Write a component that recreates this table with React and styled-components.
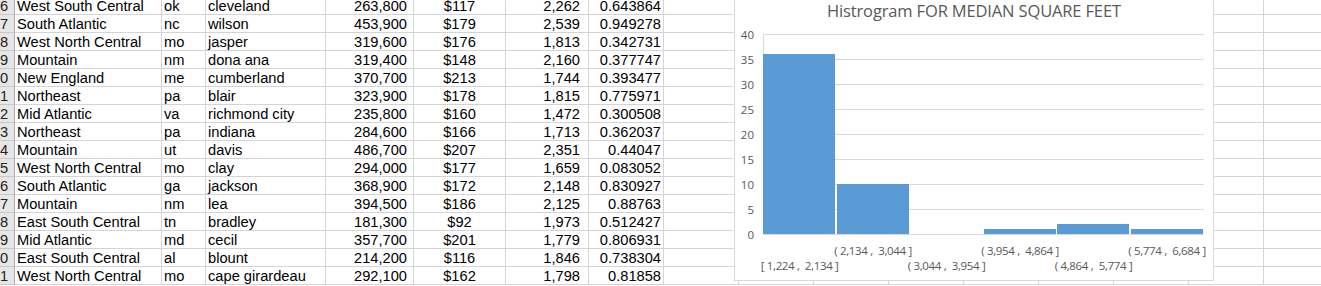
import React from 'react';
import styled, { createGlobalStyle } from 'styled-components';

const GlobalStyle = createGlobalStyle`
  html, body { margin: 0; padding: 0; background: #ffffff; overflow: hidden; }
  body { font-family: "Liberation Sans", Arial, sans-serif; }
`;

const Viewport = styled.div`
  position: relative;
  width: 1321px;
  height: 286px;
  overflow: hidden;
  background: #ffffff;
`;

const Sheet = styled.div`
  display: grid;
  grid-template-columns: 15px 147px 44px 120px 88px 92px 83px 75px repeat(9, 75px);
  grid-auto-rows: 18px;
  margin-top: -3px;
`;

const Cell = styled.div`
  box-sizing: border-box;
  border-right: 1px solid #d4d4d4;
  border-bottom: 1px solid #d4d4d4;
  font-size: 14.67px;
  line-height: 16px;
  padding-top: 1px;
  color: #000000;
  white-space: nowrap;
  overflow: hidden;
  padding-left: ${(p) => (p.$align === 'left' ? '2px' : '0')};
  padding-right: ${(p) => p.$pr || '0'};
  text-align: ${(p) => p.$align || 'left'};
`;

const RowHead = styled.div`
  box-sizing: border-box;
  background: #e6e6e6;
  border-right: 1px solid #ababab;
  border-bottom: 1px solid #c8c8c8;
  font-size: 14.67px;
  line-height: 16px;
  padding-top: 1px;
  color: #222222;
  text-align: right;
  padding-right: 6px;
  overflow: hidden;
  white-space: nowrap;
`;

const Chart = styled.div`
  position: absolute;
  left: 734px;
  top: -6px;
  width: 480px;
  height: 287px;
  box-sizing: border-box;
  border: 1px solid #d9d9d9;
  background: #ffffff;
  svg { display: block; }
`;

const rows = [
  ['6', 'West South Central', 'ok', 'cleveland', '263,800', '$117', '2,262', '0.643864'],
  ['7', 'South Atlantic', 'nc', 'wilson', '453,900', '$179', '2,539', '0.949278'],
  ['8', 'West North Central', 'mo', 'jasper', '319,600', '$176', '1,813', '0.342731'],
  ['9', 'Mountain', 'nm', 'dona ana', '319,400', '$148', '2,160', '0.377747'],
  ['0', 'New England', 'me', 'cumberland', '370,700', '$213', '1,744', '0.393477'],
  ['1', 'Northeast', 'pa', 'blair', '323,900', '$178', '1,815', '0.775971'],
  ['2', 'Mid Atlantic', 'va', 'richmond city', '235,800', '$160', '1,472', '0.300508'],
  ['3', 'Northeast', 'pa', 'indiana', '284,600', '$166', '1,713', '0.362037'],
  ['4', 'Mountain', 'ut', 'davis', '486,700', '$207', '2,351', '0.44047'],
  ['5', 'West North Central', 'mo', 'clay', '294,000', '$177', '1,659', '0.083052'],
  ['6', 'South Atlantic', 'ga', 'jackson', '368,900', '$172', '2,148', '0.830927'],
  ['7', 'Mountain', 'nm', 'lea', '394,500', '$186', '2,125', '0.88763'],
  ['8', 'East South Central', 'tn', 'bradley', '181,300', '$92', '1,973', '0.512427'],
  ['9', 'Mid Atlantic', 'md', 'cecil', '357,700', '$201', '1,779', '0.806931'],
  ['0', 'East South Central', 'al', 'blount', '214,200', '$116', '1,846', '0.738304'],
  ['1', 'West North Central', 'mo', 'cape girardeau', '292,100', '$162', '1,798', '0.81858'],
];

const EXTRA_COLS = 9;

const counts = [36, 10, 0, 1, 2, 1];
const labels = [
  '[ 1,224 ,  2,134 ]',
  '( 2,134 ,  3,044 ]',
  '( 3,044 ,  3,954 ]',
  '( 3,954 ,  4,864 ]',
  '( 4,864 ,  5,774 ]',
  '( 5,774 ,  6,684 ]',
];

const PLOT_L = 763;
const PLOT_R = 1204;
const ZERO_Y = 234;
const UNIT = 5;
const BIN = (PLOT_R - PLOT_L) / 6;

function Histogram() {
  const ticks = [0, 5, 10, 15, 20, 25, 30, 35, 40];
  const font = '"Open Sans", "Noto Sans", sans-serif';
  return (
    <svg width="478" height="285" viewBox="735 -5 478 285">
      <text
        x="974"
        y="17"
        textAnchor="middle"
        fontFamily={font}
        fontSize="16.5"
        fill="#595959"
        textLength="294"
        lengthAdjust="spacing"
      >
        Histrogram FOR MEDIAN SQUARE FEET
      </text>
      {ticks.map((t) => {
        const y = ZERO_Y - t * UNIT;
        return (
          <g key={t}>
            <line x1={PLOT_L} x2={PLOT_R} y1={y + 0.5} y2={y + 0.5} stroke="#d9d9d9" strokeWidth="1" />
            <text x="754" y={y + 5} textAnchor="end" fontFamily={font} fontSize="11.5" fill="#595959">
              {t}
            </text>
          </g>
        );
      })}
      <line x1={PLOT_L + 0.5} x2={PLOT_L + 0.5} y1={34} y2={ZERO_Y} stroke="#d9d9d9" strokeWidth="1" />
      {counts.map((c, i) =>
        c > 0 ? (
          <rect
            key={i}
            x={Math.round(PLOT_L + BIN * i)}
            y={ZERO_Y - c * UNIT}
            width={72}
            height={c * UNIT}
            fill="#5b9bd5"
          />
        ) : null
      )}
      {labels.map((l, i) => (
        <text
          key={l}
          x={PLOT_L + BIN * (i + 0.5)}
          y={i % 2 === 0 ? 269.5 : 254.5}
          textAnchor="middle"
          fontFamily={font}
          fontSize="11.5"
          fill="#595959"
          textLength="78"
          lengthAdjust="spacing"
          style={{ whiteSpace: 'pre' }}
        >
          {l}
        </text>
      ))}
    </svg>
  );
}

export default function App() {
  return (
    <>
      <GlobalStyle />
      <Viewport>
        <Sheet>
          {rows.map((r, i) => (
            <React.Fragment key={i}>
              <RowHead>{r[0]}</RowHead>
              <Cell $align="left">{r[1]}</Cell>
              <Cell $align="left">{r[2]}</Cell>
              <Cell $align="left">{r[3]}</Cell>
              <Cell $align="right" $pr="6px">{r[4]}</Cell>
              <Cell $align="center">{r[5]}</Cell>
              <Cell $align="right" $pr="8px">{r[6]}</Cell>
              <Cell $align="right" $pr="2px">{r[7]}</Cell>
              {Array.from({ length: EXTRA_COLS }).map((_, k) => (
                <Cell key={k} />
              ))}
            </React.Fragment>
          ))}
        </Sheet>
        <Chart>
          <Histogram />
        </Chart>
      </Viewport>
    </>
  );
}
